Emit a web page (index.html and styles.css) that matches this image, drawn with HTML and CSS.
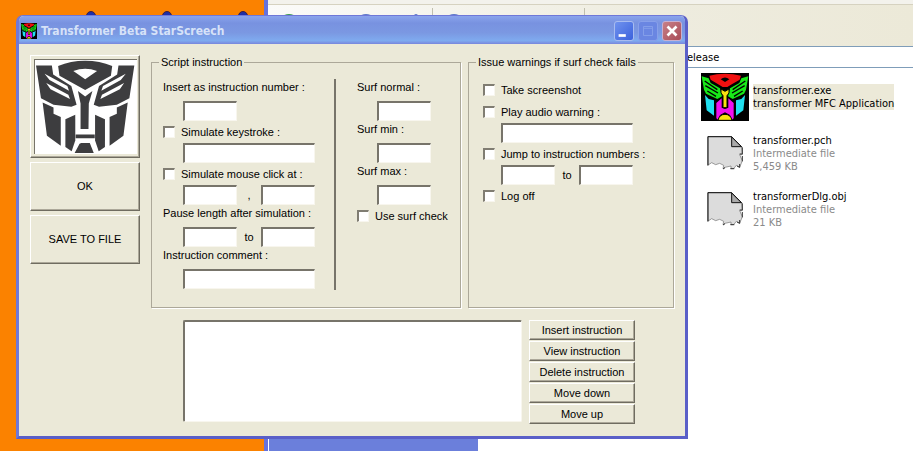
FILE: index.html
```html
<!DOCTYPE html>
<html lang="en">
<head>
<meta charset="utf-8">
<title>Transformer Beta StarScreech</title>
<link rel="stylesheet" href="styles.css">
</head>
<body>
<svg class="defs" aria-hidden="true">
  <symbol id="bot" viewBox="33 42 144 144">
    <rect x="33" y="42" width="144" height="144" fill="#000"/>
    <path fill="#f01010" d="M58 50Q80 44 105 44T153 50L149 62L128 74L112 84H98L82 74L62 62Z"/>
    <path d="M92 61Q105 50 118 61L105 69Z"/>
    <g id="bot-side">
      <path fill="#18e818" d="M35 52L56 58L62 72L90 88L96 112L82 120L48 104L42 92Z"/>
      <path d="M44 66L82 92M46 80L84 102M52 96L78 112" stroke="#000" stroke-width="4"/>
      <path fill="#20e0f0" d="M45 108L56 120L72 124V170L50 154Z"/>
      <path fill="#f010f0" d="M79 132L95 118V146L105 150V160L90 168L84 182L79 178Z"/>
    </g>
    <use href="#bot-side" transform="matrix(-1 0 0 1 210 0)"/>
    <path fill="#f8e010" stroke="#000" stroke-width="3" d="M93 90L105 97L117 90V102L111 110V146H99V110L93 102Z"/>
    <path fill="#f8e010" stroke="#000" stroke-width="3" d="M84 184Q88 166 105 166T126 184Z"/>
  </symbol>
  <symbol id="torn" viewBox="0 0 108 102">
    <path fill="#dcdcdc" stroke="#707070" stroke-width="2" d="M2 2H74L104 32L106 56H98L106 74L98 94L88 88L80 98H72V90L54 94L48 98L50 88L38 82L26 86L14 80L2 88Z"/>
    <path d="M3 88V2H74L104 32" fill="none" stroke="#111" stroke-width="3"/>
    <path d="M74 3V32H103Z" fill="#aaa" stroke="#111" stroke-width="3"/>
    <path d="M106 34V54H98M106 60V76M98 84V94L90 90M82 98H70M54 95L48 99" fill="none" stroke="#333" stroke-width="3"/>
  </symbol>
</svg>

<div class="pins" aria-hidden="true"><i></i><i></i><i></i></div>

<section class="explorer">
  <div class="menu"></div>
  <div class="toolbar">
    <i class="orb green"></i><i class="orb"></i><i class="orb small"></i><hr><i class="orb"></i><hr class="last">
  </div>
  <div class="address">elease</div>
  <div class="panes">
    <aside></aside>
    <ul class="files">
      <li><svg class="app"><use href="#bot"/></svg><div class="chosen">transformer.exe<br>transformer MFC Application</div></li>
      <li><svg class="page"><use href="#torn"/></svg><div>transformer.pch<br><span>Intermediate file<br>5,459 KB</span></div></li>
      <li><svg class="page"><use href="#torn"/></svg><div>transformerDlg.obj<br><span>Intermediate file<br>21 KB</span></div></li>
    </ul>
  </div>
</section>

<main class="dialog">
  <header>
    <svg class="mini"><use href="#bot"/></svg>
    <h1>Transformer Beta StarScreech</h1>
    <button class="cap" aria-label="Minimize"><svg viewBox="0 0 20 20"><path d="M4 15h8" stroke="#fff" stroke-width="3"/></svg></button>
    <button class="cap dim" aria-label="Maximize" disabled><svg viewBox="0 0 20 20"><path d="M5 5h10v10H5zM5 7h10" fill="none" stroke="#87a0ea" stroke-width="1"/></svg></button>
    <button class="cap close" aria-label="Close"><svg viewBox="0 0 20 20"><path d="M5 5l10 10M15 5L5 15" stroke="#fff" stroke-width="3"/></svg></button>
  </header>
  <form class="body">
    <div class="side">
      <button type="button" class="btn logo" aria-label="Logo">
        <svg viewBox="42 42 309 285">
          <path fill="#fff" d="M42 42h309v285H42z"/>
          <g fill="#3d3d3f">
            <path fill-rule="evenodd" d="M112 60Q150 44 194 44T276 60L272 90L194 133L116 90ZM158 75Q194 62 230 75L194 100Z"/>
            <g id="half">
              <path d="M45 59H93L97 86L152 121L168 178L152 184L98 178L60 158Z"/>
              <path fill="#fff" d="M71 84L140 121L145 135L86 103ZM76 112L143 147L148 160L89 131Z"/>
              <path d="M65 171L98 186V205L120 215V302L78 272Z"/>
              <path d="M134 222L164 208V286L153 319L134 306Z"/>
            </g>
            <use href="#half" transform="matrix(-1 0 0 1 388 0)"/>
            <path d="M172 136L194 153L216 136L205 174L204 251H180V174Z"/>
            <path d="M165 268H223V279H165ZM177 296L182 294H208L220 324H162Z"/>
          </g>
        </svg>
      </button>
      <button type="button" class="btn">OK</button>
      <button type="button" class="btn">SAVE TO FILE</button>
    </div>

    <fieldset class="script">
      <legend>Script instruction</legend>
      <div class="col first">
        <label class="cap-line" for="num">Insert as instruction number :</label>
        <div class="fields"><input type="text" id="num"></div>
        <label class="tick"><input type="checkbox">Simulate keystroke :</label>
        <div class="fields"><input type="text" class="wide" aria-label="Keystroke"></div>
        <label class="tick"><input type="checkbox">Simulate mouse click at :</label>
        <div class="fields"><input type="text" aria-label="Mouse x"><span>,</span><input type="text" aria-label="Mouse y"></div>
        <label class="cap-line" for="pause">Pause length after simulation :</label>
        <div class="fields"><input type="text" id="pause"><span>to</span><input type="text" aria-label="Longest pause"></div>
        <label class="cap-line" for="comment">Instruction comment :</label>
        <div class="fields"><input type="text" class="wide" id="comment"></div>
      </div>
      <div class="col second">
        <label class="cap-line" for="normal">Surf normal :</label>
        <div class="fields"><input type="text" id="normal"></div>
        <label class="cap-line" for="min">Surf min :</label>
        <div class="fields"><input type="text" id="min"></div>
        <label class="cap-line" for="max">Surf max :</label>
        <div class="fields"><input type="text" id="max"></div>
        <label class="tick"><input type="checkbox">Use surf check</label>
      </div>
    </fieldset>

    <fieldset class="warn">
      <legend>Issue warnings if surf check fails</legend>
      <div class="col">
        <label class="tick"><input type="checkbox">Take screenshot</label>
        <label class="tick"><input type="checkbox">Play audio warning :</label>
        <div class="fields"><input type="text" class="wide" aria-label="Audio warning"></div>
        <label class="tick"><input type="checkbox">Jump to instruction numbers :</label>
        <div class="fields"><input type="text" aria-label="First number"><span>to</span><input type="text" aria-label="Last number"></div>
        <label class="tick"><input type="checkbox">Log off</label>
      </div>
    </fieldset>

    <div class="bottom">
      <select class="list" size="6" aria-label="Instructions"></select>
      <div class="actions">
        <button type="button" class="btn">Insert instruction</button>
        <button type="button" class="btn">View instruction</button>
        <button type="button" class="btn">Delete instruction</button>
        <button type="button" class="btn">Move down</button>
        <button type="button" class="btn">Move up</button>
      </div>
    </div>
  </form>
</main>
</body>
</html>
```
FILE: styles.css
```css
* { box-sizing: border-box; }
body {
  margin: 0;
  min-height: 100vh;
  overflow: hidden;
  background: #fb8200;
  color: #000;
  font: 11px/13px "Liberation Sans", Arial, sans-serif;
}
.defs { position: absolute; width: 0; height: 0; }

/* Desktop */
.pins { display: flex; gap: 66px; padding: 11px 0 0 86px; }
.pins i { width: 10px; height: 10px; border-radius: 50%; background: #2030a8; border: 1px solid #402040; }

/* Explorer window */
.explorer {
  position: absolute;
  inset: 0 0 0 264px;
  display: flex;
  flex-direction: column;
  border-left: 4px solid #6672dc;
  background: #fff;
  font: 11px/13px "DejaVu Sans Condensed", Tahoma, sans-serif;
}
.menu { height: 5px; background: #f3f2ec; border-bottom: 1px solid #d6d2c0; }
.toolbar {
  display: flex;
  height: 42px;
  padding: 9px 0 0 9px;
  background: linear-gradient(90deg, #fbfbf9, #eeecdf 60%, #ece9d8);
  border-bottom: 1px solid #7f9db9;
}
.toolbar hr { width: 1px; height: 24px; margin: -6px 9px 0 2px; border: 0; background: #c0bfae; }
.toolbar hr.last { margin-left: 65px; }
.orb { width: 24px; height: 24px; margin-right: 53px; border-radius: 50%; background: #5c78c8; }
.orb.green { background: #3c9a50; }
.orb.small { width: 10px; margin: 0; }
.orb + .orb { margin-right: 33px; }
.orb + .orb.small { margin-right: 9px; }
.address { padding: 4px 0 3px 419px; border-bottom: 1px solid #7f9db9; }
.panes { display: flex; flex: 1; }
.panes aside { width: 210px; background: #6b7fdb; border-left: 1px solid #fff; }
.files { margin: 0; padding: 1px 0 0 223px; list-style: none; }
.files li { display: flex; align-items: center; gap: 4px; height: 56px; white-space: nowrap; }
.files span { color: #8a8a8a; }
.files svg { flex: none; }
.app { width: 48px; height: 48px; }
.page { width: 36px; height: 34px; margin: 0 6px; }
.chosen { background: #ece9d8; }

/* Dialog window */
.dialog {
  position: absolute;
  left: 16px;
  top: 15px;
  border: 3px solid #6f78d8;
  border-top-width: 1px;
  border-right-color: #5a5fc8;
  border-bottom-color: #5a5fc8;
  border-radius: 7px 7px 0 0;
  background: #ebe9d8;
}
.dialog header {
  display: flex;
  align-items: center;
  gap: 3px;
  height: 28px;
  padding: 1px 3px 0 2px;
  border-radius: 5px 5px 0 0;
  background: linear-gradient(#8aa4ec, #7892e0 25%, #7b98e2 60%, #7fabef 88%, #7886dc);
}
.mini { width: 16px; height: 16px; }
.dialog h1 {
  flex: 1;
  margin: 0;
  padding-left: 1px;
  color: #d6e2f8;
  font: bold 12px/16px "DejaVu Sans Condensed", "Trebuchet MS", sans-serif;
}
.cap {
  width: 20px;
  height: 20px;
  padding: 0;
  border: 1px solid #a8bcf0;
  border-radius: 3px;
  background: linear-gradient(135deg, #6f92ee, #3c62dc);
}
.cap svg { display: block; width: 18px; height: 18px; }
.cap.dim { background: #6a86e2; border-color: #88a0ea; }
.cap.close { background: linear-gradient(135deg, #c88088, #a84c58); border-color: #c8b0d0; }
.cap + .cap { margin-left: 1px; }

.body {
  display: grid;
  grid-template-columns: 110px 310px 202px;
  column-gap: 11px;
  padding: 11px 11px 12px;
}
.btn {
  padding: 0;
  border: 1px solid;
  border-color: #fff #6f6c60 #6f6c60 #fff;
  box-shadow: inset -1px -1px #aca899;
  background: #ebe9d8;
  color: #000;
  font: inherit;
}
.side { display: flex; flex-direction: column; gap: 4px; }
.side .btn { height: 49px; }
.side .logo { height: 103px; padding: 3px 3px 4px; }
.logo svg { display: block; width: 103px; height: 95px; border: 1px solid #77746a; border-width: 1px 0 0 1px; }

fieldset {
  position: relative;
  display: flex;
  min-width: 0;
  height: 253px;
  margin: 0;
  padding: 10px 10px 0 11px;
  border: 1px solid #aca899;
  box-shadow: 1px 1px #fff;
}
legend { margin-left: -4px; padding: 0 2px; line-height: 14px; }
.warn { margin-left: -4px; width: 206px; }
.warn .col { margin-left: 3px; }
.first { width: 173px; border-right: 2px solid #77746a; height: 211px; }
.second { margin-left: 21px; }
.col label { display: flex; align-items: center; height: 22px; white-space: nowrap; }
.col .cap-line { padding-bottom: 5px; }
.tick input {
  appearance: none;
  width: 12px;
  height: 12px;
  margin: 0 6px 0 0;
  background: #fff;
  border: 1px solid;
  border-width: 2px 1px 1px 2px;
  border-color: #807d72 #f8f6ee #f8f6ee #807d72;
}
.fields { display: flex; align-items: center; padding-left: 20px; }
.fields input, .list {
  background: #fff;
  border: 1px solid;
  border-width: 2px 1px 1px 2px;
  border-color: #77746a #f8f6ee #f8f6ee #77746a;
}
.fields input { width: 54px; height: 20px; padding: 0 2px; font: inherit; }
.fields .wide { width: 132px; }
.fields span { width: 24px; text-align: center; }
.warn .fields { padding-left: 18px; }

.bottom {
  grid-column: 2 / -1;
  display: flex;
  gap: 7px;
  padding: 12px 0 0 32px;
}
.list { width: 339px; height: 102px; padding: 0; overflow: hidden; }
.actions { display: flex; flex-direction: column; gap: 1px; }
.actions .btn { width: 106px; height: 20px; }
```
